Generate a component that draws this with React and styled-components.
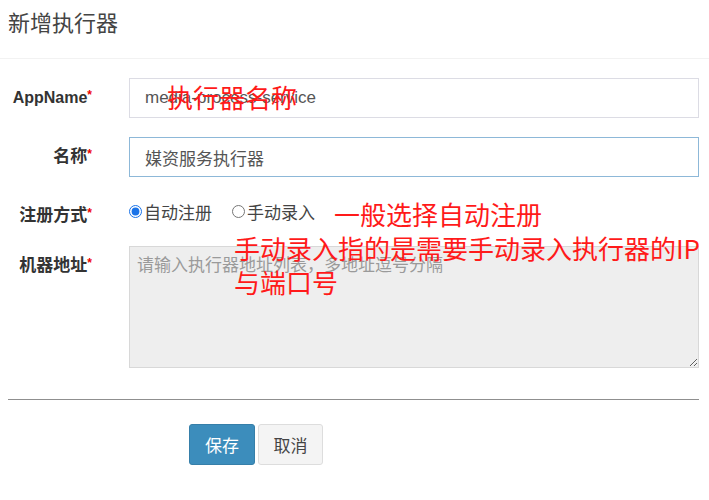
import React from 'react';
import styled, { createGlobalStyle } from 'styled-components';

const GlobalStyle = createGlobalStyle`
  body {
    margin: 0;
    background: #fff;
    font-family: "Liberation Sans", "Noto Sans CJK SC", sans-serif;
  }
`;

const App = () => {
  return (
    <Page>
      <GlobalStyle />
      <Header>
        <Title>新增执行器</Title>
      </Header>
      <Form>
        <Row>
          <Label latin>AppName<Star>*</Star></Label>
          <TextInput defaultValue="media-process-service" />
        </Row>
        <Row>
          <Label>名称<Star>*</Star></Label>
          <TextInput focused defaultValue="媒资服务执行器" />
        </Row>
        <Row gap={20}>
          <Label>注册方式<Star>*</Star></Label>
          <RadioGroup>
            <RadioOption>
              <Radio type="radio" name="type" defaultChecked />自动注册
            </RadioOption>
            <RadioOption>
              <Radio type="radio" name="type" />手动录入
            </RadioOption>
          </RadioGroup>
        </Row>
        <Row gap={0}>
          <Label>机器地址<Star>*</Star></Label>
          <AddressArea readOnly placeholder="请输入执行器地址列表，多地址逗号分隔" />
        </Row>
      </Form>
      <Divider />
      <ButtonBar>
        <Button primary>保存</Button>
        <Button>取消</Button>
      </ButtonBar>

      <Note style={{ top: 80, left: 167 }}>执行器名称</Note>
      <Note style={{ top: 197, left: 334 }}>一般选择自动注册</Note>
      <Note style={{ top: 231, left: 234 }}>
        手动录入指的是需要手动录入执行器的IP<br />与端口号
      </Note>
    </Page>
  );
};

const Page = styled.div`
  position: relative;
  width: 709px;
  height: 500px;
  overflow: hidden;
`;

const Header = styled.div`
  height: 30px;
  padding: 9px 8px 19px;
  border-bottom: 1px solid #f2f2f2;
`;

const Title = styled.h4`
  margin: 0;
  font-size: 22px;
  line-height: 30px;
  font-weight: normal;
  color: #444;
`;

const Form = styled.div`
  padding: 19px 10px 0 0;
`;

const Row = styled.div`
  display: grid;
  grid-template-columns: 92px 570px;
  column-gap: 37px;
  margin-bottom: ${p => (p.gap !== undefined ? p.gap : 19)}px;
`;

const Label = styled.label`
  text-align: right;
  padding-top: 10px;
  line-height: 20px;
  font-size: ${p => (p.latin ? 16 : 17)}px;
  font-weight: bold;
  color: #333;
`;

const Star = styled.span`
  color: #e00;
  font-size: 12px;
  vertical-align: top;
  line-height: 14px;
`;

const TextInput = styled.input`
  box-sizing: border-box;
  width: 570px;
  height: 40px;
  padding: 0 15px;
  border: 1px solid ${p => (p.focused ? '#8db8d8' : '#dcdce4')};
  font-family: "Liberation Sans", "Noto Sans CJK SC", sans-serif;
  font-size: 17px;
  color: #555;
  outline: none;
`;

const RadioGroup = styled.div`
  display: flex;
  align-items: center;
  height: 30px;
  gap: 20px;
`;

const RadioOption = styled.label`
  display: flex;
  align-items: center;
  font-size: 17px;
  color: #444;
`;

const Radio = styled.input`
  margin: 0 2px 0 0;
  width: 13px;
  height: 13px;
  accent-color: #1a73e8;
`;

const AddressArea = styled.textarea`
  box-sizing: border-box;
  width: 570px;
  height: 122px;
  padding: 7px 7px;
  border: 1px solid #d8d8d8;
  background: #eee;
  font-family: "Liberation Sans", "Noto Sans CJK SC", sans-serif;
  font-size: 17px;
  line-height: 24px;
  outline: none;
  &::placeholder {
    color: #9a9a9a;
  }
`;

const Divider = styled.div`
  margin: 31px 10px 0 8px;
  border-top: 1px solid #8f8f8f;
`;

const ButtonBar = styled.div`
  display: flex;
  gap: 3px;
  padding: 24px 0 0 189px;
`;

const Button = styled.button`
  box-sizing: border-box;
  width: ${p => (p.primary ? 66 : 65)}px;
  height: 41px;
  border-radius: 3px;
  border: 1px solid ${p => (p.primary ? '#367fa9' : '#ddd')};
  background: ${p => (p.primary ? '#3c8dbc' : '#f4f4f4')};
  color: ${p => (p.primary ? '#fff' : '#444')};
  font-family: "Liberation Sans", "Noto Sans CJK SC", sans-serif;
  font-size: 17px;
`;

const Note = styled.div`
  position: absolute;
  font-family: "Noto Sans CJK SC", sans-serif;
  font-size: 26px;
  line-height: 34px;
  color: #ff1a1a;
  white-space: nowrap;
  pointer-events: none;
`;

export default App;
